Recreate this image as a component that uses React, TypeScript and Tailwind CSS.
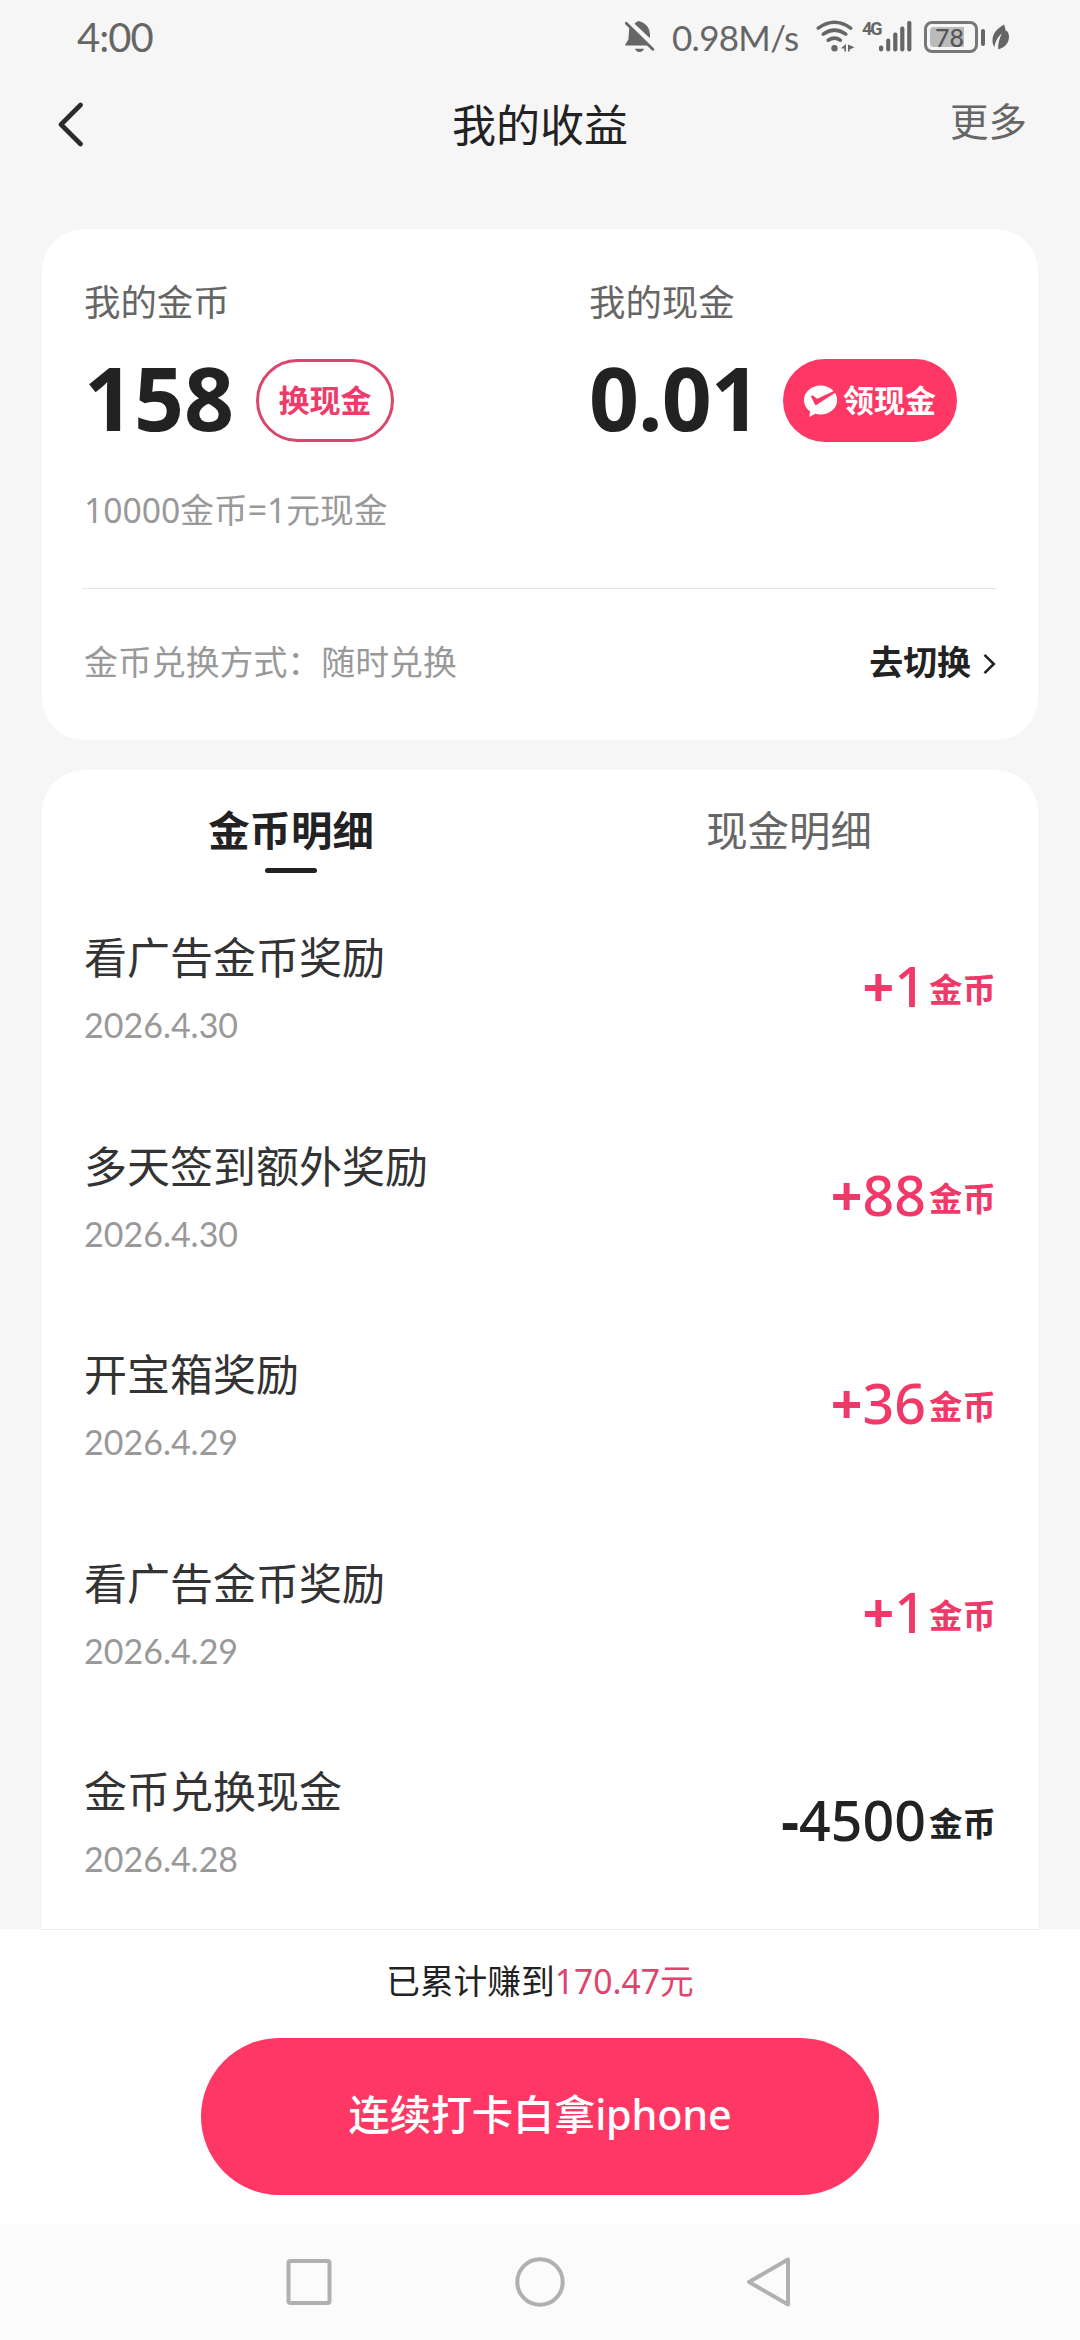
import { useState } from 'react'
import clsx from 'clsx'

interface CoinRecord {
  id: number
  title: string
  date: string
  amount: number
}

const records: CoinRecord[] = [
  { id: 1, title: '看广告金币奖励', date: '2026.4.30', amount: 1 },
  { id: 2, title: '多天签到额外奖励', date: '2026.4.30', amount: 88 },
  { id: 3, title: '开宝箱奖励', date: '2026.4.29', amount: 36 },
  { id: 4, title: '看广告金币奖励', date: '2026.4.29', amount: 1 },
  { id: 5, title: '金币兑换现金', date: '2026.4.28', amount: -4500 },
]

const tabs = ['金币明细', '现金明细']

function BellOffIcon() {
  return (
    <svg className="h-[34px] w-[31px]" viewBox="0 0 31 34" fill="#666">
      <path d="M4.3 7.5 22.5 25.5H0.6Q0 25.5 0.3 24.6L3.4 19.5Z" />
      <path d="M9.5 3.8Q11 1.8 14 1 Q24.5 4 25 14.5V18.2Z" />
      <path d="M10 28.8H19Q17.6 32 14.5 32 11.4 32 10 28.8Z" />
      <path d="M1.2 3.2 27.8 29.2" stroke="#666" strokeWidth="2.8" strokeLinecap="round" />
    </svg>
  )
}

function WifiIcon() {
  return (
    <svg className="h-[34px] w-[40px]" viewBox="0 0 40 34" fill="none" stroke="#666" strokeWidth="3.5" strokeLinecap="round">
      <path d="M2.3 8.2Q18.5 -3.6 34.7 8.2" />
      <path d="M7.2 14.2Q18.5 6 29.8 14.2" />
      <path d="M12.2 20.2Q18.5 16 24.4 20.2" />
      <circle cx="18.5" cy="28.2" r="3.2" fill="#666" stroke="none" />
      <path d="M25.5 27.8 30 24V31.4H28.4V28.6H25.5Z" fill="#666" stroke="none" />
      <path d="M38.5 27.2 32 24.6V31.4H33.6V29.4Z" fill="#666" stroke="none" />
    </svg>
  )
}

function SignalIcon() {
  return (
    <svg className="h-[34px] w-[34px]" viewBox="0 0 34 34" fill="#666">
      <rect x="0" y="25.4" width="4.2" height="6" rx="1.8" />
      <rect x="7.2" y="18.6" width="4" height="12.8" rx="1.8" />
      <rect x="14.2" y="12.6" width="4.2" height="18.8" rx="1.8" />
      <rect x="21.2" y="6.6" width="4.2" height="24.8" rx="1.8" />
      <rect x="28.2" y="1" width="4.2" height="30.4" rx="1.8" />
    </svg>
  )
}

function LeafIcon() {
  return (
    <svg className="h-[27px] w-[18px]" viewBox="0 0 18 27" fill="#666">
      <path d="M12.2 0.6C5 4.5 0.6 9.5 0.5 16.2 0.5 19.5 1.2 21.5 2.6 23 3 17.5 6 13 9.8 9.6 7.4 14.5 5.8 19.5 6.2 25.4 13 23.5 17 19 17 12.5 17 10 16 8 14.6 6.4L14 7.6Z" />
    </svg>
  )
}

function WechatPayIcon() {
  return (
    <svg className="h-[34px] w-[34px]" viewBox="0 0 34 34">
      <path d="M16.6 1.4C7.4 1.4 0 7.8 0 16 0 20.8 2.4 24.8 6.2 27.6L5.2 33 11.4 29.8C13 30.3 14.8 30.5 16.6 30.5 25.8 30.5 33.2 24.2 33.2 16 33.2 7.8 25.8 1.4 16.6 1.4Z" fill="#fff" />
      <path d="M6.9 12.2Q7.6 11 8.8 11.6L13.2 14.8 31 6.4 32.2 8 13.2 20.6Q11.6 21.8 10.8 20.2Z" fill="#ff3764" />
    </svg>
  )
}

function StatusBar() {
  return (
    <div className="flex h-[74px] items-center pl-[77px] font-['Lato','Noto_Sans_CJK_SC',sans-serif] text-[#666]">
      <span className="w-[548px] text-[40px] leading-[74px] tracking-[-1px]">4:00</span>
      <BellOffIcon />
      <span className="ml-[16px] w-[129px] text-[35px] leading-[74px] tracking-[-0.7px] whitespace-nowrap">0.98M/s</span>
      <div className="ml-[15px] flex items-center">
        <WifiIcon />
        <span className="-mt-[17px] ml-[6px] w-[17px] font-['Roboto',sans-serif] text-[18px] leading-[18px] font-bold tracking-[-2px]">4G</span>
        <SignalIcon />
      </div>
      <div className="ml-[11px] flex h-[32px] w-[54px] rounded-[8px] border-[3px] border-[#777] p-[3px]">
        <div className="flex w-[34px] items-center justify-end rounded-l-[4px] bg-[#bbb] text-[25px] leading-[22px] font-medium text-[#555]">78</div>
      </div>
      <div className="mr-[7px] ml-[3px] h-[17px] w-[4px] rounded-[2px] bg-[#666]" />
      <LeafIcon />
    </div>
  )
}

function Header() {
  return (
    <header className="grid h-[155px] grid-cols-3 items-start px-[53px] pt-[21px]">
      <svg className="mt-[6px] h-[46px] w-[32px]" viewBox="0 0 32 46" fill="none" stroke="#2b2b2b" strokeWidth="4.6" strokeLinecap="round" strokeLinejoin="round">
        <path d="M27.5 4 8 23.5 27.5 43" />
      </svg>
      <h1 className="text-center text-[44px] leading-[60px] text-[#222]">我的收益</h1>
      <span className="text-right text-[38.5px] leading-[52px] text-[#666]">更多</span>
    </header>
  )
}

function BalanceCard() {
  return (
    <section className="mx-[42px] flex h-[511px] flex-col rounded-[42px] bg-white px-[42px] pt-[47px]">
      <div className="grid grid-cols-[505px_1fr]">
        <div>
          <p className="text-[36.4px] leading-[52px] text-[#666]">我的金币</p>
          <div className="mt-[31px] flex h-[83px] items-center">
            <span className="w-[172px] pb-[7px] text-[87.5px] leading-[76px] font-bold text-[#222]">158</span>
            <button className="h-[83px] w-[138px] rounded-full border-[3px] border-[#dc466e] text-[31px] font-bold text-[#ee3b6a]">换现金</button>
          </div>
        </div>
        <div>
          <p className="text-[36.4px] leading-[52px] text-[#666]">我的现金</p>
          <div className="mt-[31px] flex h-[83px] items-center">
            <span className="w-[194px] pb-[8px] text-[87.5px] leading-[76px] font-bold tracking-[-1px] text-[#222]">0.01</span>
            <button className="flex h-[83px] w-[174px] items-center justify-center gap-[5px] rounded-full bg-[#ff3764] text-[31px] font-bold text-white">
              <WechatPayIcon />
              领现金
            </button>
          </div>
        </div>
      </div>
      <p className="mt-[43px] text-[33.7px] leading-[50px] text-[#999]">10000金币=1元现金</p>
      <div className="mt-[53px] -ml-[2px] h-px bg-[#e4e4e4]" />
      <div className="mt-[48px] flex items-center justify-between text-[33.9px] leading-[50px]">
        <span className="text-[#999]">金币兑换方式：随时兑换</span>
        <span className="flex items-center font-bold text-[#222]">
          去切换
          <svg className="mt-[4px] ml-[12px] h-[22px] w-[13px]" viewBox="0 0 13 22" fill="none" stroke="#222" strokeWidth="2.6">
            <path d="M1.5 1.8 10.8 11 1.5 20.2" />
          </svg>
        </span>
      </div>
    </section>
  )
}

function RecordRow({ record }: { record: CoinRecord }) {
  const income = record.amount > 0

  return (
    <li className="flex h-[208.6px] items-start justify-between">
      <div>
        <p className="text-[43px] leading-[60px] text-[#333]">{record.title}</p>
        <p className="mt-[12px] font-['Lato',sans-serif] text-[34px] leading-[50px] text-[#999]">{record.date}</p>
      </div>
      <div className={clsx('mt-[22px] flex items-start', income ? 'text-[#f03869]' : 'text-[#222]')}>
        <span className="text-[55.5px] leading-[72px] font-bold">{income ? '+' : '-'}</span>
        <span className="text-[55.5px] leading-[72px] font-medium">{Math.abs(record.amount)}</span>
        <span className="ml-[3px] text-[33.5px] leading-[78px] font-bold">金币</span>
      </div>
    </li>
  )
}

export default function App() {
  const [activeTab, setActiveTab] = useState(tabs[0])

  return (
    <div className="flex h-[2340px] w-[1080px] flex-col overflow-hidden bg-[#f6f6f6] font-['Noto_Sans','Noto_Sans_CJK_SC',sans-serif]">
      <StatusBar />
      <Header />
      <BalanceCard />

      <section className="mx-[42px] mt-[30px] h-[1159px] overflow-hidden rounded-t-[42px] bg-white">
        {/* Tabs */}
        <div className="grid h-[138px] grid-cols-2 pt-[30px]">
          {tabs.map((tab) => (
            <button
              key={tab}
              onClick={() => setActiveTab(tab)}
              className={clsx(
                'flex flex-col items-center text-[41.4px] leading-[60px]',
                tab === activeTab ? 'font-bold text-[#222]' : 'text-[#666]'
              )}
            >
              {tab}
              {tab === activeTab && <span className="mt-[8px] h-[5px] w-[52px] rounded-full bg-[#222]" />}
            </button>
          ))}
        </div>

        {/* Records */}
        <ul className="px-[42px] pt-[20px]">
          {records.map((record) => (
            <RecordRow key={record.id} record={record} />
          ))}
        </ul>
      </section>

      {/* Bottom action */}
      <footer className="flex h-[295px] flex-col items-center bg-white">
        <div className="h-px w-[1000px] bg-[#eee]" />
        <p className="mt-[26px] text-[33.7px] leading-[50px] text-[#222]">
          已累计赚到<span className="text-[#e0446d]">170.47元</span>
        </p>
        <button className="mt-[32px] h-[157px] w-[678px] rounded-full bg-[#ff3764] pb-[4px] text-[41.3px] font-medium tracking-[-0.2px] text-white">连续打卡白拿iphone</button>
      </footer>

      {/* System navigation */}
      <nav className="flex h-[116px] bg-[#fbfbfb] px-[284px] pt-[31px]">
        <svg className="h-[54px] w-[50px]" viewBox="0 0 50 54" fill="none" stroke="#b0b0b0" strokeWidth="4">
          <rect x="4.5" y="6" width="41" height="42" rx="2" />
        </svg>
        <svg className="ml-[179px] h-[54px] w-[54px]" viewBox="0 0 54 54" fill="none" stroke="#b0b0b0" strokeWidth="4">
          <circle cx="27" cy="27" r="22.7" />
        </svg>
        <svg className="ml-[178px] h-[54px] w-[50px]" viewBox="0 0 50 54" fill="none" stroke="#b0b0b0" strokeWidth="4" strokeLinejoin="round">
          <path d="M43 4.5V49.5L4 27Z" />
        </svg>
      </nav>
    </div>
  )
}
